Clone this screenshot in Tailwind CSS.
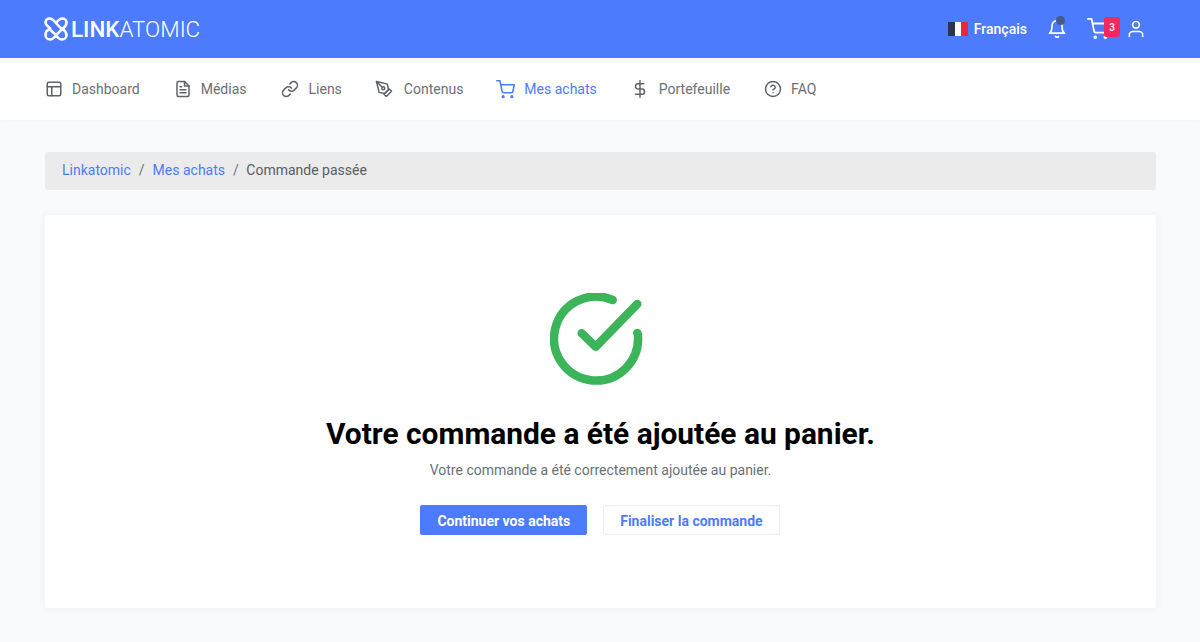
<!DOCTYPE html>
<html lang="fr">
<head>
<meta charset="utf-8">
<script src="https://cdn.jsdelivr.net/npm/@tailwindcss/browser@4"></script>
<title>Linkatomic</title>
</head>
<body class="m-0 bg-[#f9fafc] font-['Roboto',sans-serif] h-[642px] overflow-hidden">
<header class="h-[58px] bg-[#4c7cfd] flex items-center justify-between pl-[44px] pr-[54px]">
  <div class="flex items-center gap-[3px] text-white">
    <svg class="w-[24px] h-[24px]" viewBox="0 0 24 24" fill="none" stroke="white" stroke-width="2.600">
      <path d="M7 12 C3 9 1.500 7.500 1.500 5.500 C1.500 3 3.500 1.500 5.500 1.500 C8 1.500 9.500 3 12 6 C14.500 9 16 11 19 12.500 C21.500 14 22.500 16 22.500 18 C22.500 20.500 20.500 22.500 18 22.500 C15.500 22.500 14 21 12 18.500 C9.500 15.500 8 13.500 5 12.500 C2.500 13.500 1.500 16 1.500 18 C1.500 20.500 3.500 22.500 6 22.500 C8.500 22.500 10 21 12 18.500 C14.500 15.500 16.500 13.500 19 11.500 C21.500 9.500 22.500 7.500 22.500 5.500 C22.500 3 20.500 1.500 18 1.500 C15.500 1.500 14 3.500 12 6"/>
    </svg>
    <div class="text-[22.400px] leading-none"><span class="font-medium">LINK</span><span class="font-light">ATOMIC</span></div>
  </div>
  <div class="flex items-center text-white">
    <svg class="w-[20px] h-[14px]" viewBox="0 0 20 14"><rect width="7" height="14" fill="#2b3350"/><rect x="7" width="6" height="14" fill="#fff"/><rect x="13" width="7" height="14" fill="#e8263c"/></svg>
    <span class="ml-[6px] text-[14px] font-medium">Français</span>
    <div class="relative ml-[20px] w-[20px] h-[20px]">
      <svg class="w-[20px] h-[20px]" viewBox="0 0 24 24" fill="none" stroke="white" stroke-width="2" stroke-linecap="round" stroke-linejoin="round"><path d="M18 8a6 6 0 0 0-12 0c0 7-3 9-3 9h18s-3-2-3-9"/><path d="M13.700 21a2 2 0 0 1-3.400 0"/></svg>
      <span class="absolute -top-[3px] left-[9px] w-[9px] h-[9px] rounded-full bg-[#46598a]"></span>
    </div>
    <div class="relative ml-[20px] w-[22px] h-[22px]">
      <svg class="w-[22px] h-[22px]" viewBox="0 0 24 24" fill="none" stroke="white" stroke-width="2" stroke-linecap="round" stroke-linejoin="round"><circle cx="9" cy="21" r="1"/><circle cx="20" cy="21" r="1"/><path d="M1 1h4l2.680 13.390a2 2 0 0 0 2 1.610h9.720a2 2 0 0 0 2-1.610L23 6H6"/></svg>
      <span class="absolute top-[-1px] left-[17px] w-[16px] h-[20px] rounded-[2px] bg-[#f5275f] text-white text-[10px] font-medium flex items-center justify-center">3</span>
    </div>
    <svg class="ml-[17px] w-[20px] h-[20px]" viewBox="0 0 24 24" fill="none" stroke="white" stroke-width="2" stroke-linecap="round" stroke-linejoin="round"><path d="M20 21v-2a4 4 0 0 0-4-4H8a4 4 0 0 0-4 4v2"/><circle cx="12" cy="7" r="4"/></svg>
  </div>
</header>
<nav class="h-[62px] bg-white flex items-center pl-[45px] gap-[34px] text-[14px] text-[#6b6f76] shadow-[0_1px_3px_rgba(0,0,0,0.02)]">
  <a class="flex items-center gap-[9px]">
    <svg class="w-[18px] h-[18px]" viewBox="0 0 24 24" fill="none" stroke="#5f6368" stroke-width="2" stroke-linecap="round" stroke-linejoin="round"><rect x="3" y="3" width="18" height="18" rx="2"/><path d="M3 9h18M9 21V9"/></svg>
    <span>Dashboard</span>
  </a>
  <a class="flex items-center gap-[9px]">
    <svg class="w-[18px] h-[18px]" viewBox="0 0 24 24" fill="none" stroke="#5f6368" stroke-width="2" stroke-linecap="round" stroke-linejoin="round"><path d="M14 2H6a2 2 0 0 0-2 2v16a2 2 0 0 0 2 2h12a2 2 0 0 0 2-2V8z"/><path d="M14 2v6h6M16 13H8M16 17H8M10 9H8"/></svg>
    <span>Médias</span>
  </a>
  <a class="flex items-center gap-[10px]">
    <svg class="w-[18px] h-[18px]" viewBox="0 0 24 24" fill="none" stroke="#5f6368" stroke-width="2" stroke-linecap="round" stroke-linejoin="round"><path d="M10 13a5 5 0 0 0 7.540.540l3-3a5 5 0 0 0-7.070-7.070l-1.720 1.710"/><path d="M14 11a5 5 0 0 0-7.540-.540l-3 3a5 5 0 0 0 7.070 7.070l1.710-1.710"/></svg>
    <span>Liens</span>
  </a>
  <a class="flex items-center gap-[11px] -ml-[1px]">
    <svg class="w-[18px] h-[18px]" viewBox="0 0 24 24" fill="none" stroke="#5f6368" stroke-width="2" stroke-linecap="round" stroke-linejoin="round"><path d="M12 19l7-7 3 3-7 7-3-3z"/><path d="M18 13l-1.500-7.500L2 2l3.500 14.500L13 18l5-5z"/><path d="M2 2l7.590 7.590"/><circle cx="11" cy="11" r="2"/></svg>
    <span>Contenus</span>
  </a>
  <a class="flex items-center gap-[9px] -ml-[1px] text-[#4c7cfd]">
    <svg class="w-[19px] h-[19px]" viewBox="0 0 24 24" fill="none" stroke="#4c7cfd" stroke-width="2" stroke-linecap="round" stroke-linejoin="round"><circle cx="9" cy="21" r="1"/><circle cx="20" cy="21" r="1"/><path d="M1 1h4l2.680 13.390a2 2 0 0 0 2 1.610h9.720a2 2 0 0 0 2-1.610L23 6H6"/></svg>
    <span>Mes achats</span>
  </a>
  <a class="flex items-center gap-[10px]">
    <svg class="w-[18px] h-[18px]" viewBox="0 0 24 24" fill="none" stroke="#5f6368" stroke-width="2" stroke-linecap="round" stroke-linejoin="round"><path d="M12 1v22"/><path d="M17 5H9.500a3.500 3.500 0 0 0 0 7h5a3.500 3.500 0 0 1 0 7H6"/></svg>
    <span>Portefeuille</span>
  </a>
  <a class="flex items-center gap-[9px]">
    <svg class="w-[18px] h-[18px]" viewBox="0 0 24 24" fill="none" stroke="#5f6368" stroke-width="2" stroke-linecap="round" stroke-linejoin="round"><circle cx="12" cy="12" r="10"/><path d="M9.090 9a3 3 0 0 1 5.830 1c0 2-3 3-3 3"/><path d="M12 17h.01"/></svg>
    <span>FAQ</span>
  </a>
</nav>
<main class="px-[45px] pt-[32px] w-[1200px]">
  <div class="h-[38px] rounded-[3px] bg-[#ebebeb] flex items-center pl-[17px] pb-[1px] text-[14px] text-[#5a5d63] w-[1111px]">
    <a class="text-[#4c7cfd]">Linkatomic</a>
    <span class="mx-[8px] text-[#6c757d]">/</span>
    <a class="text-[#4c7cfd]">Mes achats</a>
    <span class="ml-[8px] mr-[7.500px] text-[#6c757d]">/</span>
    <span>Commande passée</span>
  </div>
  <section class="mt-[25px] h-[393px] w-[1111px] bg-white rounded-[3px] shadow-[0_0_8px_rgba(60,70,100,0.06)] flex flex-col items-center pt-[78px]">
    <svg class="w-[100px] h-[92px] shrink-0 block -ml-[2px]" viewBox="0 0 100 92" fill="none" stroke="#3cb55a" stroke-width="8.500" stroke-linecap="round" stroke-linejoin="round">
      <path d="M62.700 7 A42 42 0 1 0 87.900 42 L87.300 40"/>
      <path d="M31.700 40.300 L45.700 53.700 L87.300 11"/>
    </svg>
    <h1 class="mt-[29px] text-[29.900px] leading-[40px] font-bold text-black">Votre commande a été ajoutée au panier.</h1>
    <p class="mt-[6px] text-[14px] leading-[21px] text-[#6b6f76]">Votre commande a été correctement ajoutée au panier.</p>
    <div class="mt-[24px] flex gap-[16px] -ml-[1px]">
      <a class="h-[30px] px-[17px] pt-[2px] flex items-center rounded-[2px] bg-[#4c7cfd] text-white text-[14px] font-bold">Continuer vos achats</a>
      <a class="h-[30px] px-[16px] pt-[2px] flex items-center rounded-[2px] bg-white border border-[#ebedf2] text-[#4c7cfd] text-[14px] font-bold">Finaliser la commande</a>
    </div>
  </section>
</main>
</body>
</html>
